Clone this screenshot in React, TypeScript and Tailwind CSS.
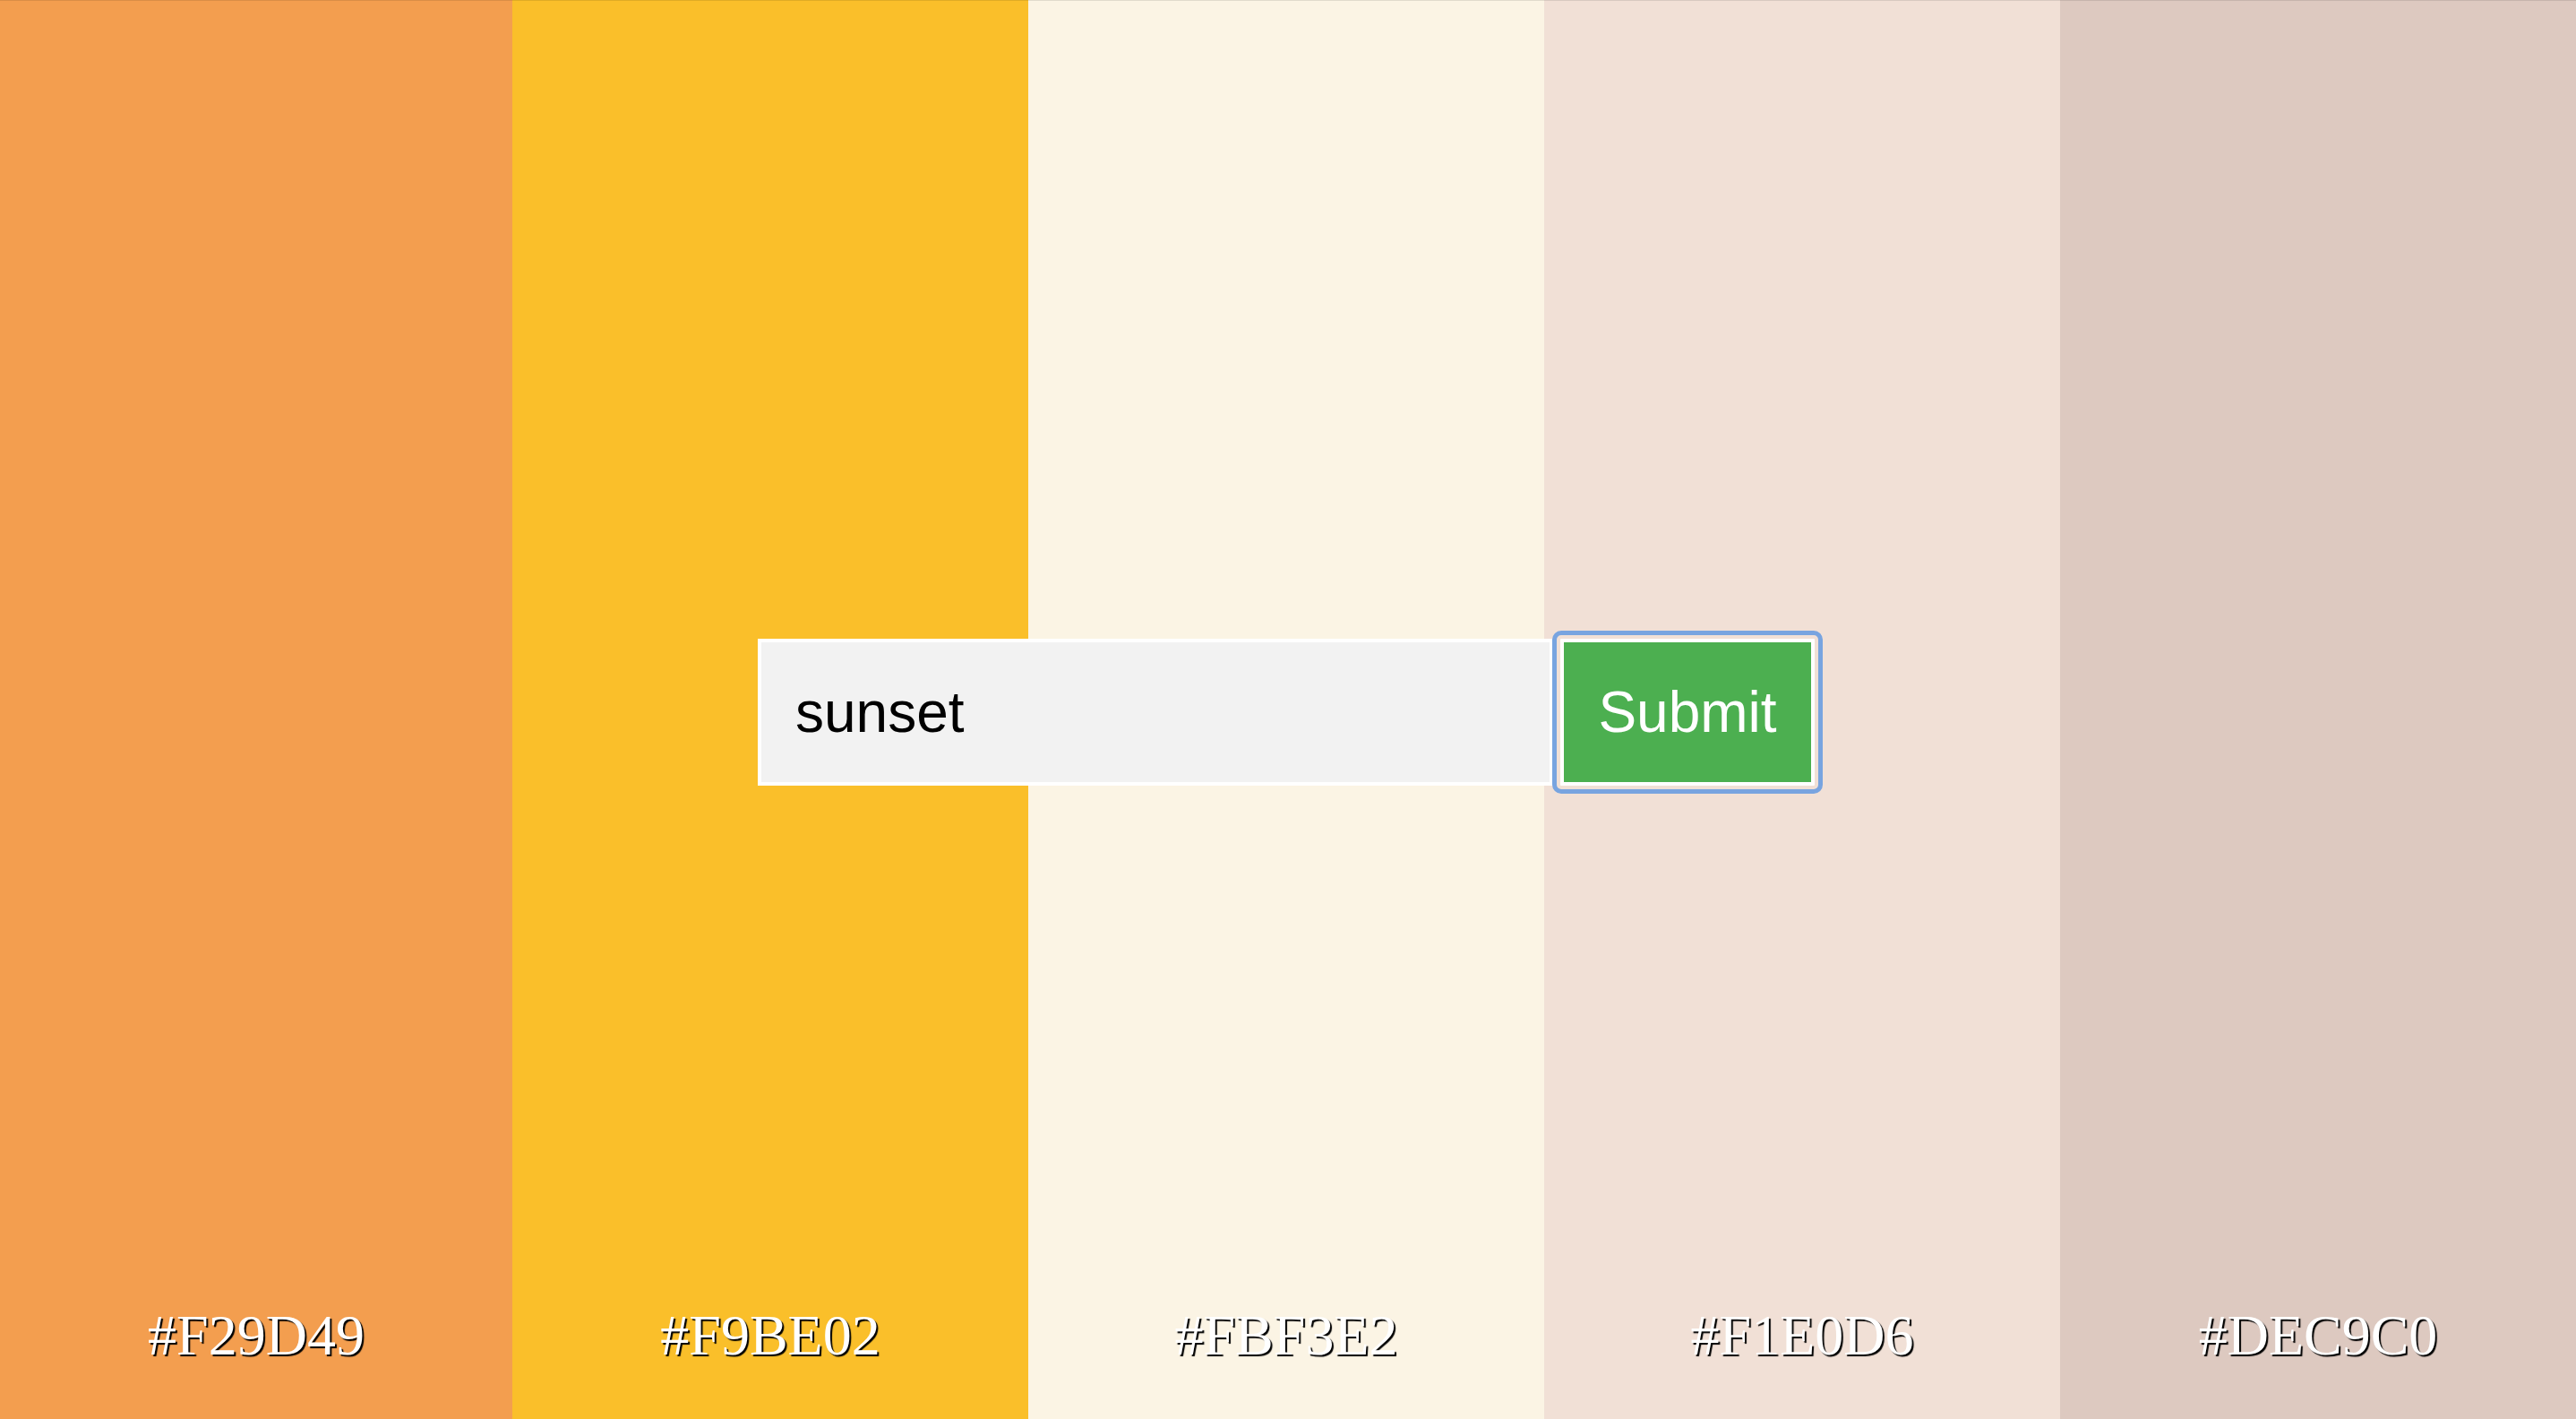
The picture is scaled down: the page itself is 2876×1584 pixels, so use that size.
import React from 'react';

const palette = [
  { hex: '#F29D49', bg: 'bg-[#F39E4F]', width: 'w-[572px]' },
  { hex: '#F9BE02', bg: 'bg-[#FABF2A]', width: 'flex-1' },
  { hex: '#FBF3E2', bg: 'bg-[#FBF4E4]', width: 'flex-1' },
  { hex: '#F1E0D6', bg: 'bg-[#F1E0D6]', width: 'flex-1' },
  { hex: '#DEC9C0', bg: 'bg-[#DDC9C0]', width: 'flex-1' },
];

const App: React.FC = () => {
  return (
    <div className="relative h-screen w-screen overflow-hidden flex">
      {/* Swatches */}
      {palette.map((c) => (
        <div
          key={c.hex}
          className={`${c.bg} ${c.width} h-full flex flex-col justify-end items-center pb-[56px] border-t border-black/10`}
        >
          <span className="text-[64px] leading-[1.15] text-white font-['Liberation_Serif','Times_New_Roman',serif] [text-shadow:2px_2px_1px_#000]">
            {c.hex}
          </span>
        </div>
      ))}

      {/* Search form over the palette */}
      <div className="absolute inset-0 flex items-center justify-center pt-[6px] pr-[4px]">
        <form
          className="flex items-center gap-[8px] font-['Liberation_Sans','Helvetica',Arial,sans-serif]"
          onSubmit={(e) => e.preventDefault()}
        >
          <input
            type="text"
            defaultValue="sunset"
            className="w-[888px] h-[164px] bg-[#F2F2F2] border-4 border-white px-[38px] text-[64px] text-black outline-none"
          />
          <button
            type="submit"
            className="relative z-10 w-[284px] h-[164px] bg-[#4CAF50] border-4 border-white text-white text-[64px] rounded-[1px] outline-[5px] outline-solid outline-[#78A4E0] outline-offset-[4px]"
          >
            Submit
          </button>
        </form>
      </div>
    </div>
  );
};

export default App;
